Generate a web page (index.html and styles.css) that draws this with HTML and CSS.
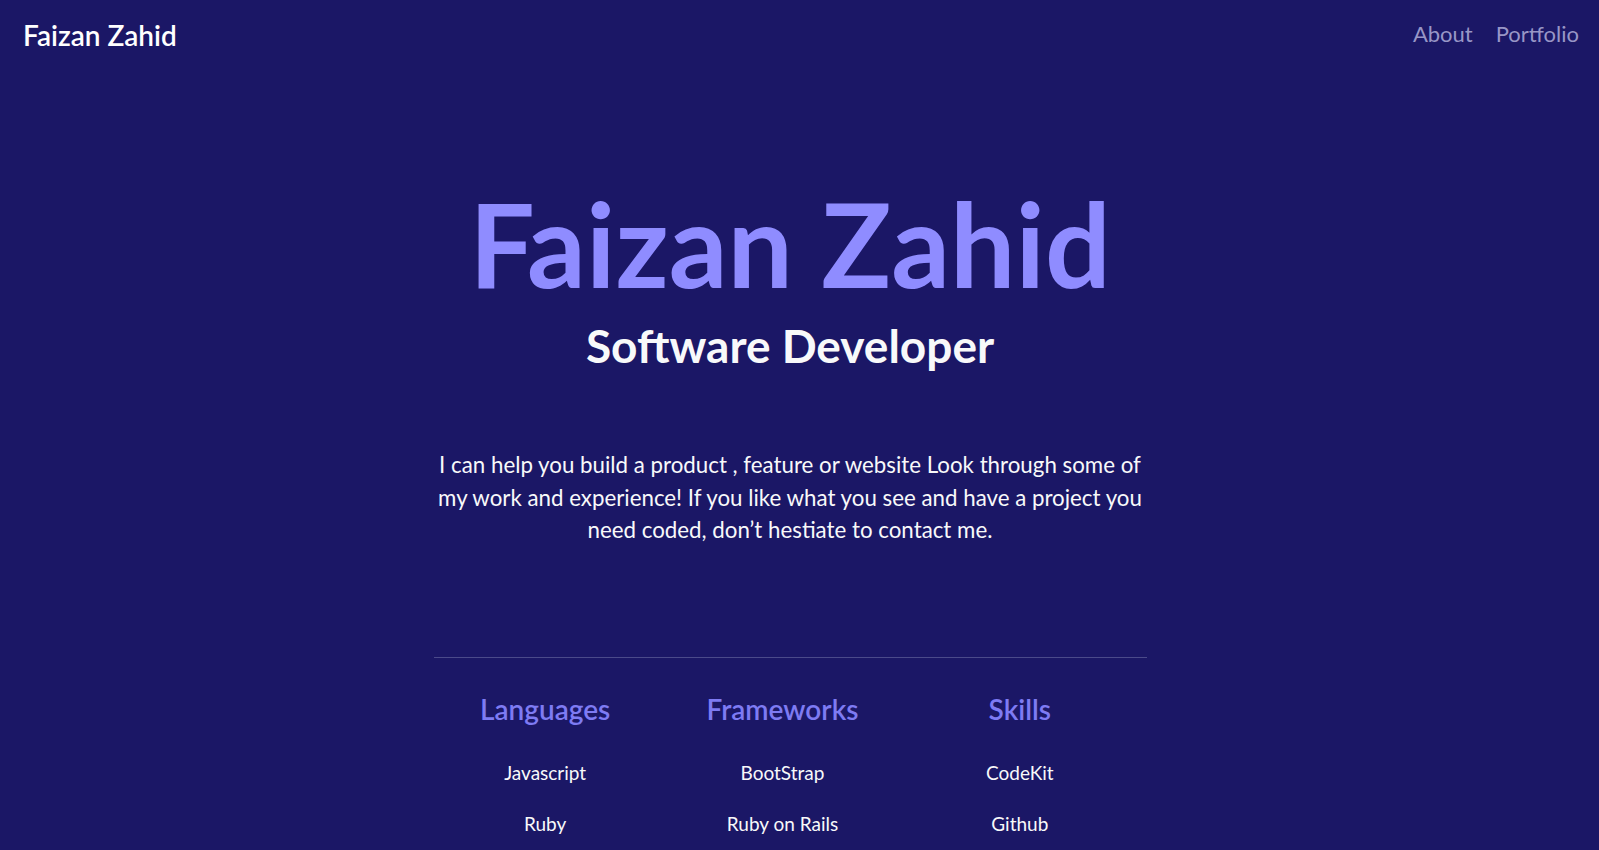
FILE: index.html
```html
<!DOCTYPE html>
<html lang="en">
<head>
<meta charset="utf-8">
<title>Faizan Zahid</title>
<link rel="stylesheet" href="styles.css">
</head>
<body>
<header class="nav">
  <a class="brand" href="#">Faizan Zahid</a>
  <nav class="links">
    <a href="#">About</a>
    <a href="#">Portfolio</a>
  </nav>
</header>
<div class="page">
  <main class="content">
    <h1 class="title">Faizan Zahid</h1>
    <h2 class="subtitle">Software Developer</h2>
    <p class="intro">I can help you build a product , feature or website Look through some of my work and experience! If you like what you see and have a project you need coded, don’t hestiate to contact me.</p>
    <hr class="rule">
    <section class="cols">
      <div class="col">
        <h3 class="col-title">Languages</h3>
        <ul class="items"><li>Javascript</li><li>Ruby</li></ul>
      </div>
      <div class="col">
        <h3 class="col-title">Frameworks</h3>
        <ul class="items"><li>BootStrap</li><li>Ruby on Rails</li></ul>
      </div>
      <div class="col">
        <h3 class="col-title">Skills</h3>
        <ul class="items"><li>CodeKit</li><li>Github</li></ul>
      </div>
    </section>
  </main>
</div>
</body>
</html>
```
FILE: styles.css
```css
* { box-sizing: border-box; }
html, body { margin: 0; padding: 0; }
body {
  background: #1b1766;
  color: #f8f9fa;
  font-family: "Lato", "Noto Sans", sans-serif;
  height: 850px;
  overflow: hidden;
}
a { text-decoration: none; }

.nav {
  display: flex;
  justify-content: space-between;
  align-items: flex-start;
  padding: 0 20px 0 23px;
}
.brand {
  color: #ffffff;
  font-size: 28px;
  font-weight: 600;
  line-height: 1;
  margin-top: 21px;
}
.links {
  display: flex;
  gap: 23px;
  margin-top: 23px;
}
.links a {
  color: #9896c6;
  font-size: 22px;
  line-height: 1;
}

.page { padding-right: 19px; }
.content {
  width: 713px;
  margin: 0 auto;
  text-align: center;
}
.title {
  margin: 137px 0 0;
  font-size: 116px;
  line-height: 1;
  font-weight: 700;
  color: #8f8cff;
  white-space: nowrap;
}
.subtitle {
  margin: 21px 0 0;
  font-size: 46px;
  line-height: 1;
  font-weight: 700;
  color: #f8f9fa;
}
.intro {
  margin: 80px 0 0;
  font-size: 22.3px;
  line-height: 32.5px;
}
.rule {
  margin: 110px 0 0;
  border: 0;
  height: 1px;
  background: #4b4a8a;
}
.cols {
  display: grid;
  grid-template-columns: repeat(3, 1fr);
  width: 712px;
  margin: 37px 0 0 -7px;
}
.col-title {
  margin: 0;
  font-size: 28px;
  line-height: 1;
  font-weight: 600;
  color: #7e7bf3;
}
.items {
  list-style: none;
  margin: 40px 0 0;
  padding: 0;
  display: flex;
  flex-direction: column;
  gap: 32px;
}
.items li {
  font-size: 19px;
  line-height: 1;
}
```
